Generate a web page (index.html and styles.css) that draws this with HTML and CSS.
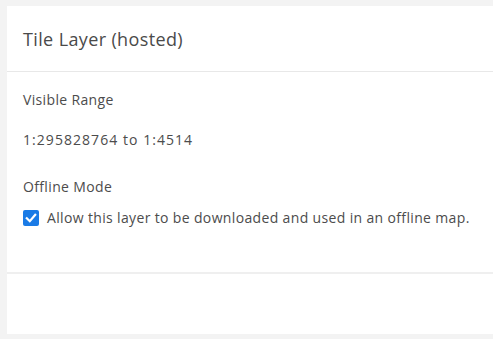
FILE: index.html
```html
<!DOCTYPE html>
<html>
<head>
<meta charset="utf-8">
<link rel="stylesheet" href="styles.css">
</head>
<body>
<div class="panel">
  <div class="header">
    <h1 class="title">Tile Layer (hosted)</h1>
  </div>
  <div class="content">
    <div class="label">Visible Range</div>
    <div class="value">1:295828764 to 1:4514</div>
    <div class="label offline">Offline Mode</div>
    <label class="check-row">
      <span class="checkbox">
        <svg viewBox="0 0 16 16" width="16" height="16"><path d="M3.8 8.2 L6.8 11.2 L12.2 4.8" fill="none" stroke="#fff" stroke-width="2.2" stroke-linecap="square"/></svg>
      </span>
      <span class="check-text">Allow this layer to be downloaded and used in an offline map.</span>
    </label>
  </div>
  <div class="footer"></div>
</div>
</body>
</html>
```

FILE: styles.css
```css
html, body {
  margin: 0;
  padding: 0;
  background: #f3f3f3;
}
body {
  padding: 6px 0 0 7px;
  font-family: "Open Sans", "Lato", sans-serif;
  color: #4c4c4c;
}
.panel {
  background: #fff;
  display: flex;
  flex-direction: column;
}
.header {
  height: 65px;
  border-bottom: 1px solid #e8e8e8;
  display: flex;
  align-items: center;
  padding-left: 16px;
}
.title {
  margin: 0;
  font-weight: 400;
  font-size: 18px;
  letter-spacing: 0.37px;
  color: #4a4a4a;
}
.content {
  height: 202px;
  padding: 18px 16px 0;
  box-sizing: border-box;
  border-bottom: 2px solid #efefef;
  font-size: 14px;
  letter-spacing: 0.35px;
}
.label {
  line-height: 20px;
}
.value {
  margin-top: 20px;
  line-height: 20px;
  letter-spacing: 1.05px;
}
.offline {
  margin-top: 27px;
}
.check-row {
  display: flex;
  align-items: center;
  gap: 8px;
  margin-top: 11px;
  line-height: 20px;
}
.checkbox {
  width: 16px;
  height: 16px;
  border-radius: 2px;
  background: #1a7be6;
  display: block;
  flex: none;
}
.checkbox svg {
  display: block;
}
.footer {
  height: 60px;
}
```
